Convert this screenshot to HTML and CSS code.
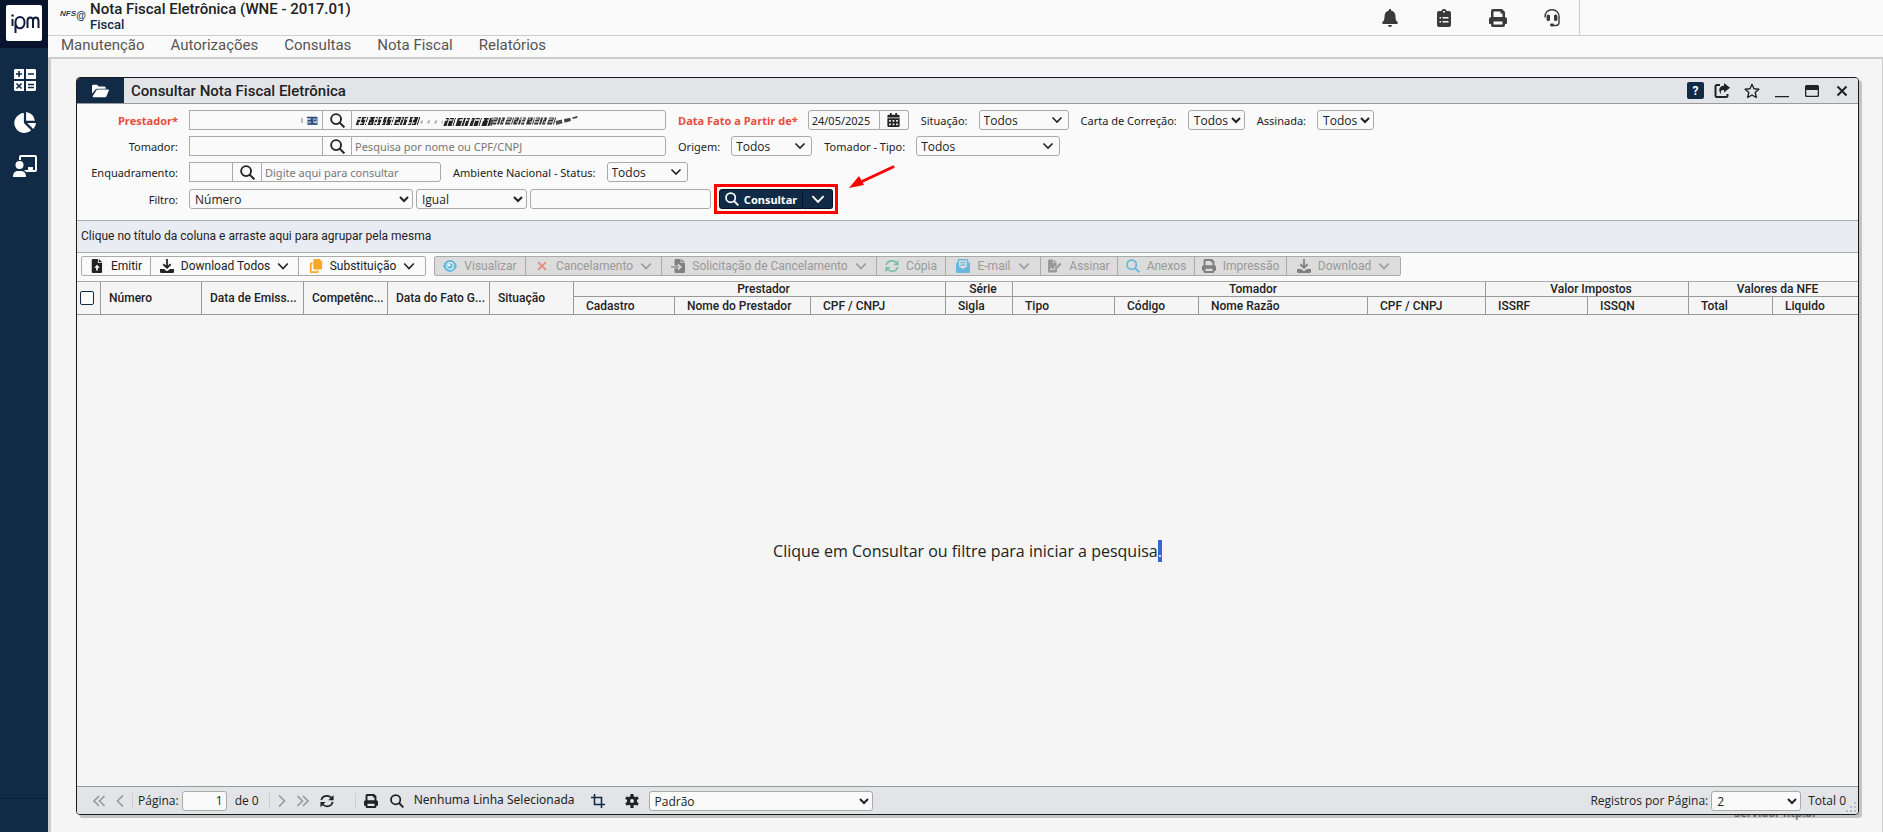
FILE: index.html
```html
<!DOCTYPE html>
<html lang="pt-BR">
<head>
  <meta charset="UTF-8">
  <meta name="viewport" content="width=device-width, initial-scale=1.0">
  <title>Nota Fiscal Eletrônica</title>
  <link rel="stylesheet" href="styles.css">
</head>
<body>
  <!-- Icons -->
  <svg class="sprite" aria-hidden="true">
    <symbol id="i-calc" viewBox="0 0 22 22"><path fill="#fff" d="M1 0h9v10H0V1zM12 0h9l1 1v9H12zM0 12h10v10H1l-1-1zM12 12h10v9l-1 1h-9z"/><path stroke="#112b47" stroke-width="1.600" d="M5 2v6M2 5h6M14 5h6M2.500 14.500l5 5M7.500 14.500l-5 5M14 15.500h6M14 18.500h6"/></symbol>
    <symbol id="i-pie" viewBox="0 0 20 20"><path d="M9 1v9l6.500 6.500A9 9 0 1 1 9 1zM11 0a9 9 0 0 1 8 8h-8zM12 10h8a9 9 0 0 1-2.500 5.500z"/></symbol>
    <symbol id="i-teach" viewBox="0 0 24 22"><circle cx="6.500" cy="10" r="4"/><path d="M0 22c0-4 2-6 5-6h3c3 0 5 2 5 6zM6 5V2q0-2 2-2h14q2 0 2 2v13q0 2-2 2h-9l-2-2h4v-3h5v3h2V2H8v3z"/></symbol>
    <symbol id="i-bell" viewBox="0 0 16 18"><path d="M7 0h2v1.500c3 .6 4.500 3 4.500 6 0 3.500.8 4.500 2 5.500.8.8.4 2-.8 2H1.300c-1.200 0-1.600-1.200-.8-2 1.200-1 2-2 2-5.500 0-3 1.500-5.400 4.500-6zM6 16h4a2 2 0 0 1-4 0z"/></symbol>
    <symbol id="i-clip" viewBox="0 0 14 18"><path fill-rule="evenodd" d="M2 2h2.300a2.800 2.800 0 0 1 5.400 0H12q2 0 2 2v12q0 2-2 2H2q-2 0-2-2V4q0-2 2-2zM7 1.700a1 1 0 1 0 0 2 1 1 0 0 0 0-2zM2.500 8v1.400H4V8zm3 0v1.400h6V8zm-3 4v1.400H4V12zm3 0v1.400h6V12z"/></symbol>
    <symbol id="i-print" viewBox="0 0 18 18"><path fill-rule="evenodd" d="M2 8V2q0-2 2-2h9l3 3v5q2 .4 2 2v4q0 1-1 1h-1v1q0 2-2 2H4q-2 0-2-2v-1H1q-1 0-1-1v-4q0-1.600 2-2zm2.500-5.500V8h9V4.500h-2v-2zM4.500 12.500v3h9v-3z"/></symbol>
    <symbol id="i-headset" viewBox="0 0 16 18"><path fill="none" stroke="currentColor" stroke-width="1.400" d="M1 8.500C.5 3.500 4 .8 8 .8s7.500 2.700 7.200 8M15 8v6q-.5 2.500-3 2.500H9"/><rect x="2.600" y="5.500" width="3.400" height="6.500" rx="1.500"/><rect x="10" y="5.500" width="3.400" height="6.500" rx="1.500"/><rect x="6" y="14.500" width="4" height="3" rx="1.400"/></symbol>
    <symbol id="i-folder" viewBox="0 0 18 14"><path d="M0 10V2Q0 .5 1.500.5h4L7 2.200h6q1.500 0 1.500 1.500V4.500H5.500Q4 4.500 3.300 6zM4.300 6.700Q4.800 5.500 6 5.500h11.300q.9 0 .5 1l-2.500 6q-.4 1-1.600 1H1.200q-.8 0-.5-.9z"/></symbol>
    <symbol id="i-share" viewBox="0 0 16 16"><path fill="none" stroke="currentColor" stroke-width="2" d="M6 2H3Q1.500 2 1.500 3.500v9Q1.500 14 3 14h9q1.500 0 1.500-1.500V11"/><path d="M10 0l6 4.800L10 9.600V7C7 7 6 8 7.500 11.500 4 8.500 4.500 3 10 2.800z"/></symbol>
    <symbol id="i-star" viewBox="0 0 16 16"><path fill="none" stroke="currentColor" stroke-width="1.400" stroke-linejoin="round" d="M8 1.300l2 4.500 4.900.5-3.700 3.300 1.100 4.900L8 12l-4.300 2.500 1.100-4.900L1.100 6.300 6 5.800z"/></symbol>
    <symbol id="i-min" viewBox="0 0 16 16"><path d="M1 13h14v1.300H1z"/></symbol>
    <symbol id="i-max" viewBox="0 0 16 16"><path fill-rule="evenodd" d="M2.500 2h11Q15 2 15 3.500v9q0 1.500-1.500 1.500h-11Q1 14 1 12.500v-9Q1 2 2.500 2zM2.300 7v5q0 .8.700.8h10q.7 0 .7-.8V7z"/></symbol>
    <symbol id="i-x" viewBox="0 0 16 16"><path fill="none" stroke="currentColor" stroke-width="2" d="M3.500 3.500l9 9M12.500 3.500l-9 9"/></symbol>
    <symbol id="i-search" viewBox="0 0 16 16"><circle cx="6.500" cy="6.500" r="5.300" fill="none" stroke="currentColor" stroke-width="2"/><path stroke="currentColor" stroke-width="2.200" d="M10 10l5.300 5.300"/></symbol>
    <symbol id="i-cal" viewBox="0 0 14 16"><path fill-rule="evenodd" d="M3 0h2v2h4V0h2v2h1.500Q14 2 14 3.500V5H0V3.500Q0 2 1.500 2H3zM0 6h14v8.500q0 1.500-1.500 1.500h-11Q0 16 0 14.500zM2 8v2h2V8zm4 0v2h2V8zm4 0v2h2V8zm-8 4v2h2v-2zm4 0v2h2v-2zm4 0v2h2v-2z"/></symbol>
    <symbol id="i-file" viewBox="0 0 12 16"><path fill-rule="evenodd" d="M1.500 0H7v4.500h4.800v10Q11.800 16 10.300 16h-9Q0 16 0 14.500v-13Q0 0 1.500 0zM8 0l4 3.700H8zM6 6.500L2.700 10H5v3h2v-3h2.300z"/></symbol>
    <symbol id="i-down" viewBox="0 0 16 16"><path fill="none" stroke="currentColor" stroke-width="2" d="M8 0v9.500M3.800 6L8 10l4.200-4"/><path d="M0 11.500h4.500L8 14l3.500-2.500H16v3q0 1.500-1.500 1.500h-13Q0 16 0 14.500z"/></symbol>
    <symbol id="i-copy" viewBox="0 0 14 16"><path d="M5.500 0H11l3 3v7.500q0 1.500-1.500 1.500h-7Q4 12 4 10.500v-9Q4 0 5.500 0zM1.500 4H3v2H2v8h6.500v-1H10v1.500q0 1.500-1.500 1.500h-7Q0 16 0 14.500v-9Q0 4 1.500 4z"/></symbol>
    <symbol id="i-eye" viewBox="0 0 16 16"><path d="M0 8q3-6.800 8-6.800T16 8q-3 6.800-8 6.800T0 8z"/><circle cx="8" cy="8" r="3.800" fill="none" stroke="#e8f4f8" stroke-width="1.300"/><circle cx="7" cy="7" r="1.500" fill="#e8f4f8"/></symbol>
    <symbol id="i-filein" viewBox="0 0 16 16"><path fill-rule="evenodd" d="M5.500 0H11v4.500h5v10q0 1.500-1.500 1.500h-9Q4 16 4 14.500V10.500h4V13l4.500-4L8 5v2.500H4v-6Q4 0 5.500 0zM12 0l4 3.700h-4zM0 8.200h9v1.600H0z"/></symbol>
    <symbol id="i-sync" viewBox="0 0 16 16"><path fill="none" stroke="currentColor" stroke-width="2" d="M1.500 7Q2.500 2 8 2q3.500 0 5.500 3M14.500 9Q13.500 14 8 14q-3.500 0-5.500-3"/><path d="M15.500 1v6h-6zM.5 15V9h6z"/></symbol>
    <symbol id="i-mail" viewBox="0 0 16 16"><path fill-rule="evenodd" d="M0 5l2-1.500V1.500Q2 0 3.500 0h9Q14 0 14 1.500v2L16 5v9.500q0 1.500-1.500 1.500h-13Q0 16 0 14.500zM3.500 1.800V8.500L8 11.500l4.500-3V1.800zM5 3.500h6v1.300H5zM5 6.300h6v1.300H5z"/></symbol>
    <symbol id="i-sign" viewBox="0 0 17 16"><path d="M1.500 0H6v4.500h4.500V7L7 10.500v1.500H5l-1.500-2L2 13h6l3-1v2.500Q11 16 9.500 16h-8Q0 16 0 14.500v-13Q0 0 1.500 0zM7 0l4 3.700H7zM14.500 4l2 2-6 6-2.500.5.500-2.500z"/></symbol>
    <symbol id="i-chev" viewBox="0 0 12 12"><path fill="none" stroke="currentColor" stroke-width="1.600" d="M1.200 3.500L6 8.500l4.800-5"/></symbol>
    <symbol id="i-left" viewBox="0 0 8 12"><path fill="none" stroke="currentColor" stroke-width="1.600" d="M7 .5L1.500 6 7 11.500"/></symbol>
    <symbol id="i-right" viewBox="0 0 8 12"><path fill="none" stroke="currentColor" stroke-width="1.600" d="M1 .5L6.500 6 1 11.500"/></symbol>
    <symbol id="i-first" viewBox="0 0 12 12"><path fill="none" stroke="currentColor" stroke-width="1.600" d="M6 1L1 6l5 5M11.500 1l-5 5 5 5"/></symbol>
    <symbol id="i-last" viewBox="0 0 12 12"><path fill="none" stroke="currentColor" stroke-width="1.600" d="M.5 1l5 5-5 5M6 1l5 5-5 5"/></symbol>
    <symbol id="i-crop" viewBox="0 0 16 16"><path fill="none" stroke="currentColor" stroke-width="1.800" d="M4 0v12h12M0 4h12v12"/></symbol>
    <symbol id="i-gear" viewBox="0 0 16 16"><circle cx="8" cy="8" r="4" fill="none" stroke="currentColor" stroke-width="3.600"/><path stroke="currentColor" stroke-width="3.600" d="M8 0v3M8 13v3M1.100 4l2.600 1.500M12.300 10.500l2.600 1.500M1.100 12l2.600-1.500M12.300 5.500l2.600-1.500"/></symbol>
  </svg>

  <!-- Sidebar -->
  <nav class="sidebar">
    <div class="brand">
      <a href="#" class="brand-logo" aria-label="ipm">
        <svg width="36" height="36" viewBox="0 0 36 36" fill="none" stroke="#101a3c" stroke-width="2"><path d="M6.500 14v7"/><path stroke-width="2.400" d="M6.500 9.500v2"/><path d="M9.500 28V17a4.500 5 0 0 1 9 0 4.500 5.500 0 0 1-9 1.500M21.500 23v-7q0-3.500 2.800-3.500T27 16v7M27 16q0-3.500 2.700-3.500T32.500 16v7"/></svg>
      </a>
    </div>
    <a href="#" class="nav-link" aria-label="Calculadora"><svg class="nav-icon"><use href="#i-calc"/></svg></a>
    <a href="#" class="nav-link" aria-label="Gráficos"><svg class="nav-icon"><use href="#i-pie"/></svg></a>
    <a href="#" class="nav-link" aria-label="Treinamento"><svg class="nav-icon"><use href="#i-teach"/></svg></a>
    <div class="sidebar-end"></div>
  </nav>

  <main class="main">
    <header class="header">
      <div class="nfs-logo"><b>NFS</b><span>@</span></div>
      <div class="header-title">
        <h1>Nota Fiscal Eletrônica (WNE - 2017.01)</h1>
        <p>Fiscal</p>
      </div>
      <div class="header-icons">
        <button aria-label="Notificações"><svg><use href="#i-bell"/></svg></button>
        <button aria-label="Tarefas"><svg><use href="#i-clip"/></svg></button>
        <button aria-label="Impressões"><svg><use href="#i-print"/></svg></button>
        <button aria-label="Suporte"><svg><use href="#i-headset"/></svg></button>
      </div>
      <div class="header-user"></div>
    </header>
    <nav class="menu">
      <a href="#">Manutenção</a>
      <a href="#">Autorizações</a>
      <a href="#">Consultas</a>
      <a href="#">Nota Fiscal</a>
      <a href="#">Relatórios</a>
    </nav>

    <div class="desktop">
      <span class="server">Servidor ntp.br</span>
      <section class="window">
        <div class="titlebar">
          <span class="title-icon"><svg><use href="#i-folder"/></svg></span>
          <h2>Consultar Nota Fiscal Eletrônica</h2>
          <div class="title-buttons">
            <button class="help" aria-label="Ajuda">?</button>
            <button aria-label="Abrir"><svg><use href="#i-share"/></svg></button>
            <button aria-label="Favorito"><svg><use href="#i-star"/></svg></button>
            <button aria-label="Minimizar"><svg><use href="#i-min"/></svg></button>
            <button aria-label="Maximizar"><svg><use href="#i-max"/></svg></button>
            <button aria-label="Fechar"><svg><use href="#i-x"/></svg></button>
          </div>
        </div>

        <!-- Filters -->
        <form class="filters">
          <div class="row">
            <label class="first required" for="prestador">Prestador*</label>
            <div class="lookup">
              <input type="text" id="prestador" class="code">
              <button type="button" aria-label="Buscar prestador"><svg><use href="#i-search"/></svg></button>
              <input type="text" class="name" aria-label="Nome do prestador">
              <svg class="smudge-code" width="20" height="12" viewBox="0 0 20 12"><path stroke="#bbb" stroke-width="2" d="M3 3v5"/><path fill="#8ba6d8" d="M8 2h11v8H8z"/><path stroke="#2f4a68" stroke-width="1.600" fill="none" d="M8 2.500h10M9 9h9M9 5.500h4M13 3v5l4-3"/><path stroke="#eef3fb" d="M14 7h4M8 4h3"/></svg>
              <svg class="smudge-name" width="226" height="12" viewBox="0 0 226 12"><g transform="skewX(-18) translate(3 0)"><path stroke="#222" stroke-width="8" stroke-dasharray="3 1 4 1 1 2 5 1 2 1 3 2" d="M2 6h62M90 7h48"/><path stroke="#fafafa" stroke-width="1.500" stroke-dasharray="4 2 3 3 1 3" d="M2 4h60M4 8h56M88 5h48"/><path stroke="#333" stroke-width="7" stroke-dasharray="1 1 4 1 2 1 3 2 5 1" d="M136 6h64"/><path stroke="#fafafa" stroke-width="1.200" stroke-dasharray="5 4 2 3" d="M136 4h64M138 7h60"/><path stroke="#444" stroke-width="2" stroke-dasharray="6 2" d="M201 7l20-5M202 9l14-4"/><path stroke="#aaa" stroke-width="3" stroke-dasharray="2 5" d="M66 7h22"/></g></svg>
            </div>
            <label class="required" for="data">Data Fato a Partir de*</label>
            <div class="date">
              <input type="text" id="data" value="24/05/2025">
              <button type="button" aria-label="Calendário"><svg><use href="#i-cal"/></svg></button>
            </div>
            <label for="situacao">Situação:</label>
            <select id="situacao" class="thin w90"><option>Todos</option></select>
            <label for="carta">Carta de Correção:</label>
            <select id="carta" class="w57"><option>Todos</option></select>
            <label for="assinada">Assinada:</label>
            <select id="assinada" class="w57"><option>Todos</option></select>
          </div>
          <div class="row">
            <label class="first" for="tomador">Tomador:</label>
            <div class="lookup">
              <input type="text" id="tomador" class="code">
              <button type="button" aria-label="Buscar tomador"><svg><use href="#i-search"/></svg></button>
              <input type="text" class="name" placeholder="Pesquisa por nome ou CPF/CNPJ" aria-label="Nome do tomador">
            </div>
            <label for="origem">Origem:</label>
            <select id="origem" class="thin w81"><option>Todos</option></select>
            <label for="tipo">Tomador - Tipo:</label>
            <select id="tipo" class="thin w144"><option>Todos</option></select>
          </div>
          <div class="row">
            <label class="first" for="enquadramento">Enquadramento:</label>
            <div class="lookup short">
              <input type="text" id="enquadramento" class="code">
              <button type="button" aria-label="Buscar enquadramento"><svg><use href="#i-search"/></svg></button>
              <input type="text" class="name" placeholder="Digite aqui para consultar" aria-label="Nome do enquadramento">
            </div>
            <label for="ambiente">Ambiente Nacional - Status:</label>
            <select id="ambiente" class="thin w81"><option>Todos</option></select>
          </div>
          <div class="row row-filter">
            <label class="first" for="filtro">Filtro:</label>
            <select id="filtro" class="w224"><option>Número</option></select>
            <select class="w111" aria-label="Operador"><option>Igual</option></select>
            <input type="text" class="w181" aria-label="Valor do filtro">
            <div class="highlight">
              <button type="button" class="search"><svg><use href="#i-search"/></svg>Consultar</button>
              <button type="button" class="search-more" aria-label="Mais opções"><svg><use href="#i-chev"/></svg></button>
              <svg class="arrow" width="46" height="26" viewBox="0 0 46 26"><path stroke="#f00" stroke-width="3" stroke-linecap="round" d="M44 3L14 17"/><path fill="#f00" d="M0 24l10-12 5 9z"/></svg>
            </div>
          </div>
        </form>

        <div class="group-panel">Clique no título da coluna e arraste aqui para agrupar pela mesma</div>

        <!-- Actions -->
        <div class="toolbar">
          <div class="buttons">
            <button class="w69"><svg><use href="#i-file"/></svg>Emitir</button>
            <button class="w148"><svg><use href="#i-down"/></svg>Download Todos<svg class="chev"><use href="#i-chev"/></svg></button>
            <button class="w126"><svg class="orange"><use href="#i-copy"/></svg>Substituição<svg class="chev"><use href="#i-chev"/></svg></button>
          </div>
          <div class="buttons off">
            <button disabled class="w91"><svg class="blue"><use href="#i-eye"/></svg>Visualizar</button>
            <button disabled class="w136"><svg class="red"><use href="#i-x"/></svg>Cancelamento<svg class="chev"><use href="#i-chev"/></svg></button>
            <button disabled class="w215"><svg class="dark"><use href="#i-filein"/></svg>Solicitação de Cancelamento<svg class="chev"><use href="#i-chev"/></svg></button>
            <button disabled class="w69"><svg class="green"><use href="#i-sync"/></svg>Cópia</button>
            <button disabled class="w95"><svg class="blue"><use href="#i-mail"/></svg>E-mail<svg class="chev"><use href="#i-chev"/></svg></button>
            <button disabled class="w77"><svg><use href="#i-sign"/></svg>Assinar</button>
            <button disabled class="w77"><svg class="blue"><use href="#i-search"/></svg>Anexos</button>
            <button disabled class="w92"><svg class="dark"><use href="#i-print"/></svg>Impressão</button>
            <button disabled class="w113"><svg class="dark"><use href="#i-down"/></svg>Download<svg class="chev"><use href="#i-chev"/></svg></button>
          </div>
        </div>

        <table class="grid">
          <colgroup>
            <col class="c24"><col class="c101"><col class="c102"><col class="c84"><col class="c102"><col class="c84">
            <col class="c101"><col class="c136"><col class="c135"><col class="c67"><col class="c102"><col class="c84">
            <col class="c169"><col class="c118"><col class="c102"><col class="c101"><col class="c84"><col>
          </colgroup>
          <thead>
            <tr class="groups">
              <th rowspan="2" class="check"><input type="checkbox" aria-label="Selecionar todos"></th>
              <th rowspan="2">Número</th>
              <th rowspan="2">Data de Emiss...</th>
              <th rowspan="2">Competênc...</th>
              <th rowspan="2">Data do Fato G...</th>
              <th rowspan="2">Situação</th>
              <th colspan="3" class="group">Prestador</th>
              <th class="group">Série</th>
              <th colspan="4" class="group">Tomador</th>
              <th colspan="2" class="group">Valor Impostos</th>
              <th colspan="2" class="group">Valores da NFE</th>
            </tr>
            <tr class="subs">
              <th>Cadastro</th><th>Nome do Prestador</th><th>CPF / CNPJ</th>
              <th>Sigla</th>
              <th>Tipo</th><th>Código</th><th>Nome Razão</th><th>CPF / CNPJ</th>
              <th>ISSRF</th><th>ISSQN</th>
              <th>Total</th><th>Liquido</th>
            </tr>
          </thead>
        </table>

        <div class="empty"><p>Clique em Consultar ou filtre para iniciar a pesquisa<mark>.</mark></p></div>

        <!-- Pagination -->
        <footer class="pager">
          <button disabled aria-label="Primeira"><svg class="ic12"><use href="#i-first"/></svg></button>
          <button disabled aria-label="Anterior"><svg class="ic12"><use href="#i-left"/></svg></button>
          <span class="sep"></span>
          <label class="page-label" for="pagina">Página:</label>
          <input type="text" id="pagina" value="1">
          <span class="total-pages">de 0</span>
          <span class="sep"></span>
          <button disabled aria-label="Próxima"><svg class="ic12"><use href="#i-right"/></svg></button>
          <button disabled aria-label="Última"><svg class="ic12"><use href="#i-last"/></svg></button>
          <button class="refresh" aria-label="Atualizar"><svg><use href="#i-sync"/></svg></button>
          <span class="sep"></span>
          <button aria-label="Imprimir"><svg><use href="#i-print"/></svg></button>
          <button aria-label="Pesquisar"><svg><use href="#i-search"/></svg></button>
          <span class="selected">Nenhuma Linha Selecionada</span>
          <button class="crop" aria-label="Recortar"><svg><use href="#i-crop"/></svg></button>
          <button aria-label="Configurar"><svg><use href="#i-gear"/></svg></button>
          <select class="w224" aria-label="Layout"><option>Padrão</option></select>
          <div class="pager-end">
            <label for="registros">Registros por Página:</label>
            <select id="registros" class="w90"><option>2</option></select>
            <span>Total 0</span>
          </div>
          <svg class="grip" width="10" height="10" viewBox="0 0 10 10"><path fill="#b4bcc6" d="M8 0h2v2H8zM4 4h2v2H4zM8 4h2v2H8zM0 8h2v2H0zM4 8h2v2H4zM8 8h2v2H8z"/></svg>
        </footer>
      </section>
    </div>
  </main>
</body>
</html>
```

FILE: styles.css
```css
* {
  box-sizing: border-box;
}

body {
  margin: 0;
  min-height: 100vh;
  display: flex;
  font-family: "Open Sans", "Noto Sans", sans-serif;
  font-size: 12px;
  color: #222;
  background-color: #f5f5f5;
}

h1, h2, p {
  margin: 0;
}

button, input, select {
  font: inherit;
  color: inherit;
}

button {
  display: flex;
  align-items: center;
  justify-content: center;
  padding: 0;
  border: 0;
  background: none;
}

svg {
  fill: currentColor;
  flex: none;
}

.sprite {
  position: absolute;
  width: 0;
  height: 0;
}

/* Sidebar */
.sidebar {
  flex: none;
  width: 48px;
  display: flex;
  flex-direction: column;
  align-items: center;
  gap: 20px;
  background-color: #112b47;
  color: #fff;
}

.sidebar a {
  display: flex;
  color: #fff;
}

.sidebar .nav-link {
  padding: 1px 0 0 2px;
}

.brand {
  width: 100%;
  height: 48px;
  padding: 5px 6px;
  background-color: #09142e;
}

.sidebar .brand-logo {
  width: 36px;
  height: 36px;
  border-radius: 2px;
  background-color: #fff;
}

.nav-icon {
  width: 24px;
  height: 22px;
}

.sidebar-end {
  width: 100%;
  height: 34px;
  margin-top: auto;
  border-top: 1px solid #0a1f38;
}

/* Header */
.main {
  flex: 1;
  min-width: 0;
  display: flex;
  flex-direction: column;
}

.header {
  display: flex;
  height: 36px;
  background-color: #fafafa;
  border-bottom: 1px solid #ccc;
}

.nfs-logo {
  display: flex;
  width: 42px;
  padding: 8px 0 0 12px;
  font-family: "Liberation Sans", sans-serif;
  font-size: 8px;
  font-style: italic;
  line-height: 12px;
  color: #26415e;
}

.nfs-logo span {
  padding-top: 2px;
  font-size: 10px;
  font-weight: bold;
}

.header-title {
  font-family: Roboto, sans-serif;
  font-weight: 500;
}

.header-title h1 {
  font-size: 15px;
  font-weight: 500;
  line-height: 18px;
}

.header-title p {
  color: #112b47;
  font-size: 13px;
  line-height: 13px;
}

.header-icons {
  display: flex;
  align-items: center;
  gap: 36px;
  margin-left: auto;
  padding: 0 18px;
  color: #3a3a3a;
}

.header-icons svg {
  width: 18px;
  height: 18px;
}

.header-user {
  width: 304px;
  border-left: 1px solid #ccc;
}

.menu {
  display: flex;
  gap: 26px;
  height: 23px;
  padding-left: 13px;
  border-bottom: 2px solid #ccc;
  background-color: #fafafa;
}

.menu a {
  font-family: Roboto, sans-serif;
  font-size: 15px;
  line-height: 19px;
  color: #555;
  text-decoration: none;
}

/* Window */
.desktop {
  position: relative;
  flex: 1;
  display: flex;
  padding: 18px 23px 17px 25px;
  border-left: 3px solid #ccc;
  border-right: 1px solid #ccc;
}

.server {
  position: absolute;
  right: 65px;
  bottom: 11px;
  font-size: 11px;
  font-weight: bold;
  line-height: 16px;
  color: #888;
}

.window {
  position: relative;
  flex: 1;
  min-width: 0;
  display: flex;
  flex-direction: column;
  border: 1px solid #1a1a1a;
  border-radius: 4px;
  overflow: hidden;
  background-color: #f5f5f5;
  box-shadow: 3px 3px 0 rgba(0, 0, 0, 0.2);
}

.titlebar {
  display: flex;
  align-items: center;
  height: 26px;
  border-bottom: 1px solid #999;
  background-color: #e3e4e8;
}

.title-icon {
  width: 47px;
  height: 25px;
  display: flex;
  align-items: center;
  justify-content: center;
  background-color: #112b47;
  color: #fff;
}

.title-icon svg {
  width: 17px;
  height: 14px;
}

.titlebar h2 {
  margin-left: 7px;
  font-family: Roboto, sans-serif;
  font-size: 15px;
  font-weight: 500;
  line-height: 24px;
}

.title-buttons {
  display: flex;
  gap: 14px;
  margin-left: auto;
  padding-right: 8px;
}

.title-buttons svg {
  width: 16px;
  height: 16px;
}

.title-buttons .help {
  width: 17px;
  height: 17px;
  margin-right: -4px;
  border-radius: 2px;
  background-color: #112b47;
  color: #fff;
  font-family: Roboto, sans-serif;
  font-weight: bold;
}

/* Filters */
.filters {
  display: flex;
  flex-direction: column;
  gap: 6px;
  height: 116px;
  padding-top: 6px;
  background-color: #fafafa;
}

.row {
  display: flex;
  align-items: center;
  height: 20px;
}

.row-filter {
  gap: 3px;
  margin-top: 1px;
}

.row label {
  margin: 0 11px 0 12px;
  white-space: nowrap;
}

.row label, .row input {
  font-family: "Noto Sans", sans-serif;
  font-size: 11px;
}

.row .first {
  width: 101px;
  margin: 0 11px 0 0;
  text-align: right;
}

.row-filter .first {
  margin-right: 8px;
}

.row .required {
  color: #e74c3c;
  font-family: "Open Sans", sans-serif;
  font-weight: bold;
}

.lookup + .required {
  margin-right: 10px;
}

input, select {
  height: 20px;
  border: 1px solid #aaa;
  border-radius: 3px;
  background-color: #fafafa;
  outline: none;
}

input {
  padding: 0 3px;
}

input::placeholder {
  color: #777;
}

select {
  padding: 0 0 0 1px;
}

select.thin {
  appearance: none;
  padding-left: 4px;
  background-image: url("data:image/svg+xml,%3Csvg xmlns='http://www.w3.org/2000/svg' width='12' height='12'%3E%3Cpath fill='none' stroke='%23222' stroke-width='1.600' d='M1.500 3.500L6 8l4.500-4.500'/%3E%3C/svg%3E");
  background-repeat: no-repeat;
  background-position: right 5px center;
}

.lookup, .date {
  position: relative;
  display: flex;
}

.lookup button, .date button {
  height: 20px;
  border: 1px solid #aaa;
  border-width: 1px 0;
}

.lookup button {
  width: 28px;
}

.lookup svg {
  width: 15px;
  height: 15px;
}

.lookup .code {
  width: 134px;
  border-radius: 0;
}

.lookup .name {
  width: 315px;
  border-radius: 0 3px 3px 0;
}

.short .code {
  width: 44px;
}

.lookup.short .name {
  width: 180px;
}

.lookup .smudge-code {
  position: absolute;
  left: 110px;
  top: 5px;
  width: 20px;
  height: 12px;
}

.lookup .smudge-name {
  position: absolute;
  left: 165px;
  top: 5px;
  width: 226px;
  height: 12px;
}

.date input {
  width: 72px;
  border-radius: 3px 0 0 3px;
}

.date button {
  width: 29px;
  border-right-width: 1px;
  border-radius: 0 3px 3px 0;
}

.date svg {
  width: 13px;
  height: 14px;
}

.highlight {
  position: relative;
  display: flex;
  padding: 2px;
  border: 3px solid #f00;
}

.highlight button {
  height: 20px;
  border: 1px solid #06121f;
  background-color: #112b47;
  color: #fff;
}

.highlight .search {
  width: 84px;
  gap: 5px;
  border-radius: 3px 0 0 3px;
  font-family: "Noto Sans", sans-serif;
  font-size: 11px;
  font-weight: bold;
}

.highlight .search-more {
  width: 30px;
  border-left: 0;
  border-radius: 0 3px 3px 0;
}

.highlight button svg {
  width: 14px;
  height: 14px;
}

.arrow {
  position: absolute;
  left: 132px;
  top: -23px;
}

/* Grid */
.group-panel {
  height: 33px;
  padding-left: 4px;
  border-top: 1px solid #aaa;
  border-bottom: 1px solid #aaa;
  background-color: #e9edf3;
  font-family: Roboto, sans-serif;
  line-height: 30px;
}

.toolbar {
  display: flex;
  gap: 8px;
  height: 28px;
  padding: 3px 4px;
  background-color: #fafafa;
  font-family: Roboto, sans-serif;
}

.buttons {
  display: flex;
  height: 20px;
  border: 1px solid #aaa;
  border-radius: 2px;
}

.buttons button {
  gap: 7px;
  border-right: 1px solid #aaa;
  white-space: nowrap;
}

.buttons button:last-child {
  border-right: 0;
}

.buttons svg {
  width: 14px;
  height: 14px;
}

.buttons .chev {
  width: 12px;
  height: 12px;
}

.off {
  background-color: #dcdcdc;
  color: #999;
}

.orange { color: #f9a826; }
.blue { color: #66b9dc; }
.red { color: #e58b82; }
.green { color: #7cc0a4; }
.dark { color: #808080; }

.grid {
  width: 100%;
  table-layout: fixed;
  border-collapse: separate;
  border-spacing: 0;
  border-top: 1px solid #aaa;
}

.grid th {
  height: 18px;
  padding: 0 8px;
  border-right: 1px solid #999;
  border-bottom: 1px solid #999;
  overflow: hidden;
  text-align: left;
  white-space: nowrap;
  font-family: Roboto, sans-serif;
  font-size: 12px;
  font-weight: 500;
  line-height: 14px;
}

.grid .groups th:last-child, .grid .subs th:last-child {
  border-right: 0;
}

.grid .group {
  height: 15px;
  padding: 0 4px 0 12px;
  text-align: center;
}

.grid .subs th {
  padding: 0 4px 0 12px;
}

.grid .check {
  padding: 0 3px;
}

.check input {
  appearance: none;
  display: block;
  width: 14px;
  height: 14px;
  margin: 0;
  border: 1px solid #112b47;
  border-radius: 2px;
  background-color: #fff;
}

.empty {
  flex: 1;
  display: flex;
  align-items: center;
  justify-content: center;
  font-size: 16px;
  font-weight: 500;
}

.empty mark {
  background-color: #3367d1;
  color: #fff;
}

/* Pagination */
.pager {
  position: relative;
  display: flex;
  align-items: center;
  height: 28px;
  padding-left: 11px;
  border-top: 1px solid #999;
  background-color: #e3e4e8;
}

.pager button {
  width: 26px;
}

.pager button:disabled {
  width: 21px;
  color: #999;
}

.pager svg {
  width: 14px;
  height: 14px;
}

.pager .ic12 {
  width: 12px;
  height: 12px;
}

.pager .sep {
  width: 1px;
  height: 15px;
  margin: 0 2px;
  background-color: #ccc;
}

.page-label {
  margin-left: 3px;
}

.pager #pagina {
  width: 45px;
  margin: 0 8px 0 3px;
  text-align: right;
}

.total-pages {
  margin-right: 8px;
}

.refresh {
  margin-right: 13px;
}

.selected {
  margin: 0 10px 2px 4px;
  font-family: "Noto Sans", sans-serif;
}

.pager .crop {
  color: #112b47;
  margin-right: 8px;
}

.pager .w224 {
  margin-left: 4px;
}

.pager-end {
  display: flex;
  align-items: center;
  gap: 3px;
  margin-left: auto;
  padding-right: 12px;
}

.pager-end span {
  margin-left: 4px;
}

.pager .grip {
  position: absolute;
  right: 2px;
  bottom: 2px;
  width: 10px;
  height: 10px;
}

/* Widths */
.w57 { width: 57px; }
.w69 { width: 69px; }
.w77 { width: 77px; }
.w81 { width: 81px; }
.w90 { width: 90px; }
.w91 { width: 91px; }
.w92 { width: 92px; }
.w95 { width: 95px; }
.w111 { width: 111px; }
.w113 { width: 113px; }
.w126 { width: 126px; }
.w136 { width: 136px; }
.w144 { width: 144px; }
.w148 { width: 148px; }
.w181 { width: 181px; }
.w215 { width: 215px; }
.w224 { width: 224px; }

.c24 { width: 24px; }
.c67 { width: 67px; }
.c84 { width: 84px; }
.c101 { width: 101px; }
.c102 { width: 102px; }
.c118 { width: 118px; }
.c135 { width: 135px; }
.c136 { width: 136px; }
.c169 { width: 169px; }
```
